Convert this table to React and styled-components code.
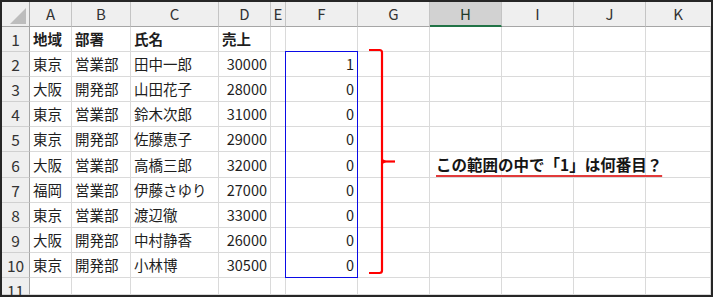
import React from "react";
import styled, { createGlobalStyle } from "styled-components";

const GlobalStyle = createGlobalStyle`
  html, body { margin: 0; padding: 0; background: #fff; }
`;

const COLS = ["A", "B", "C", "D", "E", "F", "G", "H", "I", "J", "K"];
const COL_WIDTHS = [28, 42, 59, 88, 52, 15, 72, 72, 72, 72, 72, 65];
const ROW_HEIGHTS = [25, 25, 25, 25, 25, 25, 26, 25, 25, 25, 25, 17];

const DATA = [
  ["地域", "部署", "氏名", "売上", "", ""],
  ["東京", "営業部", "田中一郎", "30000", "", "1"],
  ["大阪", "開発部", "山田花子", "28000", "", "0"],
  ["東京", "営業部", "鈴木次郎", "31000", "", "0"],
  ["東京", "開発部", "佐藤恵子", "29000", "", "0"],
  ["大阪", "営業部", "高橋三郎", "32000", "", "0"],
  ["福岡", "営業部", "伊藤さゆり", "27000", "", "0"],
  ["東京", "営業部", "渡辺徹", "33000", "", "0"],
  ["大阪", "開発部", "中村静香", "26000", "", "0"],
  ["東京", "開発部", "小林博", "30500", "", "0"],
  ["", "", "", "", "", ""],
];

const Frame = styled.div`
  position: relative;
  box-sizing: border-box;
  width: 713px;
  height: 297px;
  border: 2px solid #262626;
  overflow: hidden;
  background: #fff;
`;

const Sheet = styled.div`
  display: grid;
  grid-template-columns: ${COL_WIDTHS.map((w) => w + "px").join(" ")};
  grid-template-rows: ${ROW_HEIGHTS.map((h) => h + "px").join(" ")};
`;

const HeaderBase = styled.div`
  box-sizing: border-box;
  background: #efefef;
  display: flex;
  align-items: center;
  justify-content: center;
  font-family: "Noto Sans CJK JP", "Noto Sans", sans-serif;
  color: #333;
`;

const Corner = styled(HeaderBase)`
  border-right: 1px solid #a6a6a6;
  border-bottom: 1px solid #a6a6a6;
  align-items: flex-end;
  justify-content: flex-end;
  padding: 0 3px 2px 0;
`;

const ColHeader = styled(HeaderBase)`
  font-size: 15px;
  padding-bottom: 1px;
  border-right: 1px solid ${(p) => (p.$last ? "transparent" : "#c4c4c4")};
  border-bottom: ${(p) => (p.$active ? "2px solid #217346" : "1px solid #a6a6a6")};
  background: ${(p) => (p.$active ? "#d2d2d2" : "#efefef")};
  color: ${(p) => (p.$active ? "#1f3b2a" : "#333")};
`;

const RowHeader = styled(HeaderBase)`
  font-size: 15.5px;
  border-right: 1px solid #a6a6a6;
  border-bottom: 1px solid #d0d0d0;
  align-items: ${(p) => (p.$cut ? "flex-start" : "center")};
  padding-top: ${(p) => (p.$cut ? "1px" : "0")};
`;

const Cell = styled.div`
  box-sizing: border-box;
  border-right: 1px solid #dadada;
  border-bottom: 1px solid #dadada;
  display: flex;
  align-items: center;
  justify-content: ${(p) => (p.$align === "right" ? "flex-end" : "flex-start")};
  padding: 0 ${(p) => (p.$align === "right" ? "3px" : "0")} 1px
    ${(p) => (p.$align === "right" ? "0" : "3px")};
  font-family: "Noto Sans CJK JP", sans-serif;
  font-size: 14.5px;
  font-weight: ${(p) => (p.$bold ? 700 : 400)};
  color: #1e1e1e;
  white-space: nowrap;
  overflow: visible;
  min-width: 0;
`;

const Note = styled.span`
  margin-left: 3px;
  font-family: "Noto Sans CJK JP", sans-serif;
  font-size: 15.5px;
  font-weight: 700;
  color: #151515;
  text-decoration: underline;
  text-decoration-color: #e23a3a;
  text-decoration-thickness: 2px;
  text-underline-offset: 4px;
  position: relative;
  z-index: 2;
`;

const RangeBox = styled.div`
  position: absolute;
  box-sizing: border-box;
  border: 1px solid #0b0be6;
  pointer-events: none;
`;

const BracketSvg = styled.svg`
  position: absolute;
  pointer-events: none;
`;

const CornerTriangle = () => (
  <svg width="16" height="16" viewBox="0 0 16 16">
    <polygon points="16,0 16,16 0,16" fill="#bdbdbd" />
  </svg>
);

export default function App() {
  const colStarts = [];
  let acc = 0;
  COL_WIDTHS.forEach((w) => {
    colStarts.push(acc);
    acc += w;
  });
  const rowStarts = [];
  acc = 0;
  ROW_HEIGHTS.forEach((h) => {
    rowStarts.push(acc);
    acc += h;
  });
  // range F2:F10 (column index 6 in grid, rows 2..10)
  const boxLeft = colStarts[6] - 1;
  const boxTop = rowStarts[2] - 1;
  const boxWidth = COL_WIDTHS[6] + 1;
  const boxHeight = rowStarts[11] - rowStarts[2] + 1;

  return (
    <>
      <GlobalStyle />
      <Frame>
        <Sheet>
          <Corner>
            <CornerTriangle />
          </Corner>
          {COLS.map((c, i) => (
            <ColHeader key={c} $active={c === "H"} $last={i === COLS.length - 1}>
              {c}
            </ColHeader>
          ))}
          {DATA.map((row, r) => (
            <React.Fragment key={r}>
              <RowHeader $cut={r === 10}>{r + 1}</RowHeader>
              {COLS.map((c, ci) => {
                const v = row[ci] || "";
                const numeric = /^\d+$/.test(v);
                if (r === 5 && c === "H") {
                  return (
                    <Cell key={c}>
                      <Note>この範囲の中で「1」は何番目？</Note>
                    </Cell>
                  );
                }
                return (
                  <Cell key={c} $align={numeric ? "right" : "left"} $bold={r === 0}>
                    {v}
                  </Cell>
                );
              })}
            </React.Fragment>
          ))}
        </Sheet>
        <RangeBox
          style={{ left: boxLeft, top: boxTop, width: boxWidth, height: boxHeight }}
        />
        <BracketSvg
          style={{ left: 363, top: 43 }}
          width="40"
          height="236"
          viewBox="0 0 40 236"
        >
          <path
            d="M4 5 H14.5 Q17 5 17 7.5 V225.5 Q17 228 14.5 228 H4"
            fill="none"
            stroke="#ff0000"
            strokeWidth="2.2"
            strokeLinejoin="round"
          />
          <path d="M17 116.5 H30" stroke="#ff0000" strokeWidth="2.2" fill="none" />
          <polygon points="17,113.8 22,116.5 17,119.2" fill="#ff0000" />
        </BracketSvg>
      </Frame>
    </>
  );
}
